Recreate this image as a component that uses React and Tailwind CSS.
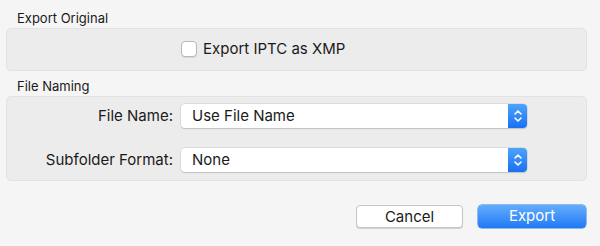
const font = { fontFamily: 'Inter, "Liberation Sans", sans-serif' };

function Stepper() {
  return (
    <span className="flex h-full w-[19px] items-center justify-center rounded-r-[4px] bg-gradient-to-b from-[#4ba3fd] to-[#1b6ff2]">
      <svg width="10" height="16" viewBox="0 0 10 16" fill="none" stroke="white" strokeWidth="1.6" strokeLinecap="round" strokeLinejoin="round">
        <path d="M2 6 L5 3 L8 6" />
        <path d="M2 10 L5 13 L8 10" />
      </svg>
    </span>
  );
}

function Select({ value }) {
  return (
    <div className="flex h-[24px] w-[346px] items-stretch rounded-[4px] bg-white shadow-[0_0_0_0.5px_#c9c9c9,0_1px_1px_#bdbdbd]">
      <span className="flex-1 pl-[11px] text-[15px] leading-[24px] text-[#1a1a1a]">{value}</span>
      <Stepper />
    </div>
  );
}

function Row({ label, value }) {
  return (
    <div className="flex items-center">
      <span className="w-[166px] text-right text-[15px] text-[#1a1a1a]">{label}</span>
      <span className="w-[8px]" />
      <Select value={value} />
    </div>
  );
}

export default function App() {
  return (
    <div className="h-[246px] w-[600px] bg-[#f5f5f5] px-[6px] pt-[11px]" style={font}>
      <div className="pl-[11px] text-[13px] leading-[15px] text-[#1a1a1a]">Export Original</div>
      <div className="mt-[2px] h-[43px] w-[581px] rounded-[5px] border border-[#e2e2e2] bg-[#ececec] pl-[174px] pt-[11px]">
        <label className="flex items-center gap-[6px] text-[15px] leading-[18px] text-[#1a1a1a]">
          <span className="h-[16px] w-[16px] rounded-[4px] border border-[#b9b9b9] bg-white shadow-[0_1px_0_#d8d8d8]" />
          Export IPTC as XMP
        </label>
      </div>
      <div className="mt-[8px] pl-[11px] text-[13px] leading-[15px] text-[#1a1a1a]">File Naming</div>
      <div className="mt-[2px] flex h-[85px] w-[581px] flex-col gap-[20px] rounded-[5px] border border-[#e2e2e2] bg-[#ececec] pt-[7px]">
        <Row label="File Name:" value="Use File Name" />
        <Row label="Subfolder Format:" value="None" />
      </div>
      <div className="mt-[24px] flex justify-end gap-[15px] pr-[8px]">
        <button className="h-[23px] w-[107px] rounded-[4px] border border-[#c6c6c6] bg-white text-[15px] text-[#1a1a1a] shadow-[0_1px_0_#d0d0d0]">Cancel</button>
        <button className="h-[23px] w-[108px] rounded-[4px] bg-gradient-to-b from-[#63adfc] to-[#1f78f4] text-[15px] text-white shadow-[0_0_0_0.5px_#2f7fe8]">Export</button>
      </div>
    </div>
  );
}
